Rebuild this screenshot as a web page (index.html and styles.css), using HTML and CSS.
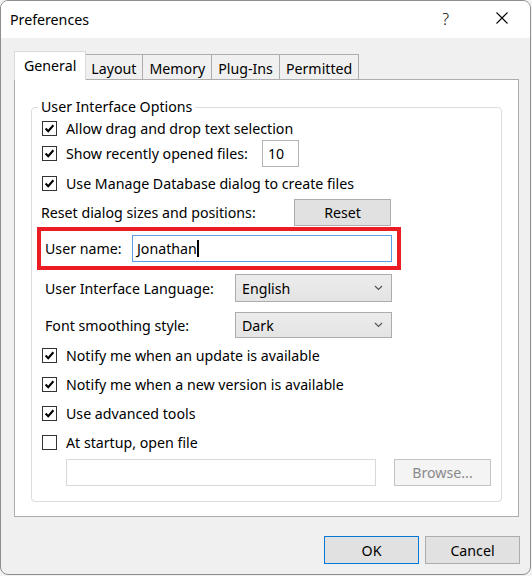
FILE: index.html
```html
<!DOCTYPE html>
<html lang="en">
<head>
  <meta charset="UTF-8">
  <title>Preferences</title>
  <link rel="stylesheet" href="styles.css">
</head>
<body>
  <div class="window">
    <div class="titlebar">
      <span class="title">Preferences</span>
      <span class="help">?</span>
      <svg class="close" width="12" height="12" viewBox="0 0 12 12">
        <path d="M0.5 0.5 L11.5 11.5 M11.5 0.5 L0.5 11.5" stroke="#000" stroke-width="1.1" fill="none"/>
      </svg>
    </div>

    <div class="dialog">
      <div class="tabs">
        <div class="tab active">General</div>
        <div class="tab">Layout</div>
        <div class="tab">Memory</div>
        <div class="tab">Plug-Ins</div>
        <div class="tab">Permitted</div>
      </div>

      <div class="panel">
        <fieldset class="group">
          <legend>User Interface Options</legend>

          <div class="row r1">
            <span class="check on"></span>Allow drag and drop text selection
          </div>
          <div class="row r2">
            <span class="check on"></span><span class="recent-label">Show recently opened files:</span>
            <span class="field small">10</span>
          </div>
          <div class="row r3">
            <span class="check on"></span>Use Manage Database dialog to create files
          </div>
          <div class="row r4">
            <span class="reset-label">Reset dialog sizes and positions:</span>
            <button class="btn reset">Reset</button>
          </div>
          <div class="row r5 highlight">
            <span class="user-label">User name:</span>
            <span class="field user">Jonathan<span class="caret"></span></span>
          </div>
          <div class="row r6">
            <span class="pick-label">User Interface Language:</span>
            <span class="select">English</span>
          </div>
          <div class="row r7">
            <span class="pick-label">Font smoothing style:</span>
            <span class="select">Dark</span>
          </div>
          <div class="row r8">
            <span class="check on"></span>Notify me when an update is available
          </div>
          <div class="row r9">
            <span class="check on"></span>Notify me when a new version is available
          </div>
          <div class="row r10">
            <span class="check on"></span>Use advanced tools
          </div>
          <div class="row r11">
            <span class="check"></span>At startup, open file
          </div>
          <div class="row r12">
            <span class="field path disabled"></span>
            <button class="btn browse" disabled>Browse...</button>
          </div>
        </fieldset>
      </div>

      <div class="actions">
        <button class="btn default">OK</button>
        <button class="btn">Cancel</button>
      </div>
    </div>
  </div>
</body>
</html>
```

FILE: styles.css
```css
body {
  margin: 0;
  background: #f3f3f3;
  font-family: "Noto Sans", sans-serif;
  font-size: 14.2px;
  color: #000000;
}

.window {
  width: 531px;
  height: 575px;
  box-sizing: border-box;
  border: 1px solid #8e8e8e;
  border-radius: 8px;
  overflow: hidden;
  background: #f0f0f0;
}

.titlebar {
  height: 37px;
  background: #ffffff;
  display: flex;
  align-items: center;
  padding-left: 9px;
}

.title {
  flex: 1;
}

.help {
  font-size: 16px;
  font-weight: 300;
  margin-right: 47px;
  margin-top: -1px;
}

.close {
  margin-right: 22px;
  margin-top: -3px;
}

.dialog {
  padding: 13px 0 0 13px;
}

/* tab strip */
.tabs {
  display: flex;
  align-items: flex-end;
  height: 28px;
}

.tab {
  height: 25px;
  box-sizing: border-box;
  padding: 2px 6px 0 6px;
  border: 1px solid #adadad;
  border-bottom: none;
  margin-left: -1px;
  display: flex;
  align-items: center;
  background: #f0f0f0;
}

.tab.active {
  height: 29px;
  margin-left: 0;
  margin-bottom: -1px;
  padding: 0 9px 2px 9px;
  background: #ffffff;
  border-color: #d9d9d9;
  position: relative;
  z-index: 1;
}

.tab.active + .tab {
  border-left: none;
}

.panel {
  width: 505px;
  height: 438px;
  box-sizing: border-box;
  border: 1px solid #adadad;
  background: #ffffff;
  padding: 17px 0 0 16px;
}

/* group box */
.group {
  margin: 0;
  width: 471px;
  height: 405px;
  box-sizing: border-box;
  padding: 0 9px 15px 10px;
  border: 1px solid #dcdcdc;
  border-radius: 4px;
}

.group legend {
  padding: 0 3px;
  margin-left: -4px;
  line-height: 20px;
}

.row {
  display: flex;
  align-items: center;
  white-space: nowrap;
}

.r1 { margin-top: 1px; height: 20px; }
.r2 { margin-top: 1px; height: 28px; }
.r3 { margin-top: 6px; height: 20px; }
.r4 { margin-top: 5px; height: 28px; }
.r5 { margin-top: 1px; height: 43px; }
.r6 { margin-top: 4px; height: 28px; }
.r7 { margin-top: 10px; height: 26px; }
.r8 { margin-top: 7px; height: 20px; }
.r9 { margin-top: 9px; height: 20px; }
.r10 { margin-top: 9px; height: 20px; }
.r11 { margin-top: 9px; height: 20px; }
.r12 { margin-top: 7px; height: 27px; }

.check {
  width: 15px;
  height: 15px;
  box-sizing: border-box;
  border: 1px solid #333333;
  background: #ffffff;
  margin-right: 9px;
  flex-shrink: 0;
}

.check.on {
  background: #ffffff url("data:image/svg+xml,%3Csvg xmlns='http://www.w3.org/2000/svg' width='13' height='13' viewBox='0 0 13 13'%3E%3Cpath d='M2.6 6.6 L5.2 9.2 L10.4 3.2' stroke='%23000' stroke-width='2.1' fill='none'/%3E%3C/svg%3E") no-repeat center;
}

.field {
  box-sizing: border-box;
  border: 1px solid #b3b3b3;
  background: #ffffff;
  height: 27px;
  display: flex;
  align-items: center;
  padding-left: 5px;
}

.recent-label {
  width: 196px;
}

.field.small {
  width: 37px;
}

.reset-label {
  width: 253px;
  margin-left: -1px;
}

.btn {
  font-family: inherit;
  font-size: 14.2px;
  color: #000000;
  background: #e1e1e1;
  border: 1px solid #adadad;
  height: 28px;
  padding: 0;
  box-sizing: border-box;
}

.btn.reset {
  width: 97px;
  height: 27px;
}

/* red frame around the user name */
.highlight {
  margin-left: -5px;
  width: 364px;
  box-sizing: border-box;
  border: 4px solid #ec1c24;
  padding-left: 4px;
}

.user-label {
  width: 87px;
}

.field.user {
  width: 260px;
  height: 27px;
  border-color: #5a9ee6;
  padding-left: 4px;
}

.caret {
  display: inline-block;
  width: 2px;
  height: 17px;
  background: #000000;
}

.pick-label {
  width: 190px;
  padding-left: 3px;
}

.select {
  width: 157px;
  height: 100%;
  box-sizing: border-box;
  border: 1px solid #acacac;
  display: flex;
  align-items: center;
  padding-left: 6px;
  background-image: url("data:image/svg+xml,%3Csvg xmlns='http://www.w3.org/2000/svg' width='9' height='6' viewBox='0 0 9 6'%3E%3Cpath d='M1 1 L4.5 4.5 L8 1' stroke='%23555' stroke-width='1.2' fill='none'/%3E%3C/svg%3E"), linear-gradient(#ececec, #e4e4e4);
  background-repeat: no-repeat;
  background-position: right 8px center, 0 0;
}

.field.path {
  width: 310px;
  margin-left: 24px;
  border-color: #d9d9d9;
}

.btn.browse {
  width: 97px;
  height: 27px;
  margin-left: 18px;
  background: #f4f4f4;
  border-color: #c4c4c4;
  color: #8a8a8a;
}

/* dialog buttons */
.actions {
  display: flex;
  justify-content: flex-end;
  gap: 6px;
  margin-top: 19px;
  padding-right: 10px;
}

.actions .btn {
  width: 95px;
}

.btn.default {
  border-color: #0078d7;
}
```
